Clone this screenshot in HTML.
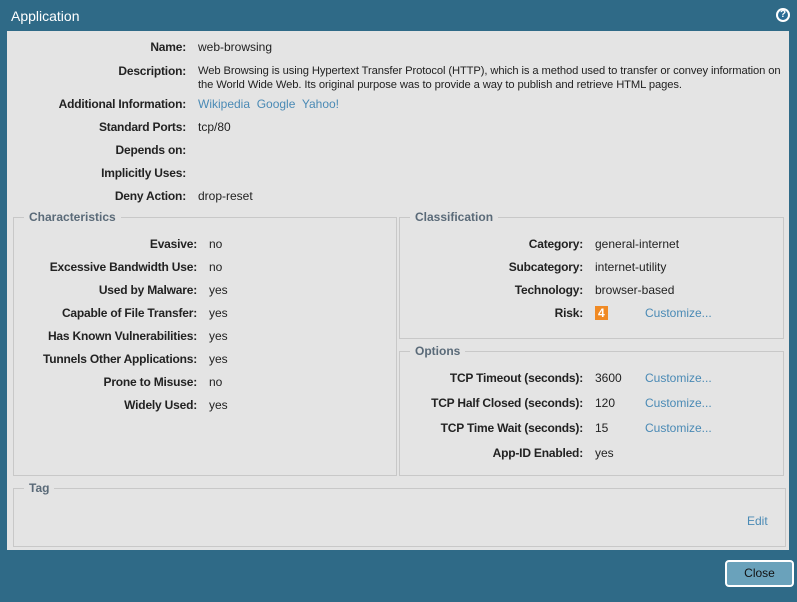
<!DOCTYPE html>
<html><head><style>
body{margin:0;width:797px;height:602px;background:#2f6a87;position:relative;font-family:"Liberation Sans",Tahoma,sans-serif;font-size:12px;color:#222;overflow:hidden}
.title{position:absolute;left:11px;top:8px;color:#fff;font-size:14px}
.help{position:absolute;left:776px;top:8px;width:14px;height:14px;border-radius:50%;background:#fff;}
.help:after{content:"";position:absolute;left:2px;top:2px;width:10px;height:10px;border-radius:50%;background:#2a6c95}
.help span{position:absolute;left:0;top:1px;width:14px;text-align:center;color:#fff;font-weight:bold;font-size:10px;z-index:2}
.content{position:absolute;left:7px;top:31px;width:782px;height:519px;background:#e4e4e4}
.l{position:absolute;font-weight:bold;text-align:right;white-space:nowrap;color:#222;letter-spacing:-0.2px}
.v{position:absolute;white-space:nowrap}
a,.a{color:#4a8ab5;text-decoration:none}
.fs{position:absolute;border:1px solid #c8c8c8}
.lg{position:absolute;top:-8px;left:10px;background:#e4e4e4;padding:0 5px;font-weight:bold;color:#5a6a78}
.risk{display:inline-block;background:#f08a24;color:#fff;font-weight:bold;padding:0 3px;line-height:14px}
.btn{position:absolute;left:725px;top:560px;width:65px;height:23px;border:2px solid #fff;border-radius:4px;background:#6aa2bb;text-align:center;line-height:23px;color:#111}
</style></head><body>
<div class="title">Application</div>
<div class="help"><span>?</span></div>
<div class="content"></div>
<div class="l" style="right:611px;top:40px">Name:</div><div class="v" style="left:198px;top:40px">web-browsing</div>
<div class="l" style="right:611px;top:64px">Description:</div><div class="v" style="left:198px;top:64px;line-height:14px;font-size:11.2px;letter-spacing:-0.1px">Web Browsing is using Hypertext Transfer Protocol (HTTP), which is a method used to transfer or convey information on<br>the World Wide Web. Its original purpose was to provide a way to publish and retrieve HTML pages.</div>
<div class="l" style="right:611px;top:97px">Additional Information:</div><div class="v" style="left:198px;top:97px"><a>Wikipedia</a>&nbsp; <a>Google</a>&nbsp; <a>Yahoo!</a></div>
<div class="l" style="right:611px;top:120px">Standard Ports:</div><div class="v" style="left:198px;top:120px">tcp/80</div>
<div class="l" style="right:611px;top:143px">Depends on:</div>
<div class="l" style="right:611px;top:166px">Implicitly Uses:</div>
<div class="l" style="right:611px;top:189px">Deny Action:</div><div class="v" style="left:198px;top:189px">drop-reset</div>

<div class="fs" style="left:13px;top:217px;width:382px;height:257px"><div class="lg">Characteristics</div></div>
<div class="l" style="right:600px;top:237px">Evasive:</div><div class="v" style="left:209px;top:237px">no</div>
<div class="l" style="right:600px;top:260px">Excessive Bandwidth Use:</div><div class="v" style="left:209px;top:260px">no</div>
<div class="l" style="right:600px;top:283px">Used by Malware:</div><div class="v" style="left:209px;top:283px">yes</div>
<div class="l" style="right:600px;top:306px">Capable of File Transfer:</div><div class="v" style="left:209px;top:306px">yes</div>
<div class="l" style="right:600px;top:329px">Has Known Vulnerabilities:</div><div class="v" style="left:209px;top:329px">yes</div>
<div class="l" style="right:600px;top:352px">Tunnels Other Applications:</div><div class="v" style="left:209px;top:352px">yes</div>
<div class="l" style="right:600px;top:375px">Prone to Misuse:</div><div class="v" style="left:209px;top:375px">no</div>
<div class="l" style="right:600px;top:398px">Widely Used:</div><div class="v" style="left:209px;top:398px">yes</div>

<div class="fs" style="left:399px;top:217px;width:383px;height:120px"><div class="lg">Classification</div></div>
<div class="l" style="right:214px;top:237px">Category:</div><div class="v" style="left:595px;top:237px">general-internet</div>
<div class="l" style="right:214px;top:260px">Subcategory:</div><div class="v" style="left:595px;top:260px">internet-utility</div>
<div class="l" style="right:214px;top:283px">Technology:</div><div class="v" style="left:595px;top:283px">browser-based</div>
<div class="l" style="right:214px;top:306px">Risk:</div><div class="v" style="left:595px;top:306px"><span class="risk">4</span></div><div class="v a" style="left:645px;top:306px">Customize...</div>

<div class="fs" style="left:399px;top:351px;width:383px;height:123px"><div class="lg">Options</div></div>
<div class="l" style="right:214px;top:371px">TCP Timeout (seconds):</div><div class="v" style="left:595px;top:371px">3600</div><div class="v a" style="left:645px;top:371px">Customize...</div>
<div class="l" style="right:214px;top:396px">TCP Half Closed (seconds):</div><div class="v" style="left:595px;top:396px">120</div><div class="v a" style="left:645px;top:396px">Customize...</div>
<div class="l" style="right:214px;top:421px">TCP Time Wait (seconds):</div><div class="v" style="left:595px;top:421px">15</div><div class="v a" style="left:645px;top:421px">Customize...</div>
<div class="l" style="right:214px;top:446px">App-ID Enabled:</div><div class="v" style="left:595px;top:446px">yes</div>

<div class="fs" style="left:13px;top:488px;width:771px;height:57px"><div class="lg">Tag</div></div>
<div class="v a" style="left:747px;top:514px">Edit</div>
<div class="btn">Close</div>
</body></html>
